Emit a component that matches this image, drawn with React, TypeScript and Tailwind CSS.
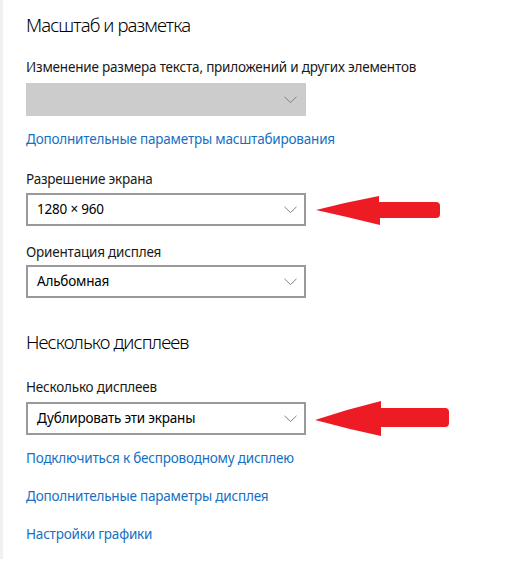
import React from "react";

const Chevron: React.FC = () => (
  <svg width="13" height="8" viewBox="0 0 13 8" className="shrink-0">
    <path d="M0.5 0.8 L6.5 6.6 L12.5 0.8" fill="none" stroke="#808080" strokeWidth="1" />
  </svg>
);

const Dropdown: React.FC<{ value?: string; disabled?: boolean }> = ({ value, disabled }) => (
  <div
    className={
      disabled
        ? "w-[280px] h-[33px] bg-[#cccccc] flex items-center justify-end pr-[9px]"
        : "w-[280px] h-[33px] border-2 border-[#999999] bg-white flex items-center justify-between pl-[9px] pr-[7px]"
    }
  >
    {value && <span className="text-[13.5px] tracking-[-0.2px] text-black">{value}</span>}
    <Chevron />
  </div>
);

const RedArrow: React.FC<{ big?: boolean }> = ({ big }) =>
  big ? (
    <svg width="136" height="37" viewBox="0 0 136 37" className="ml-[8px] shrink-0">
      <path
        d="M1 20 Q34 9 67 1 L67 8 L131 8 Q135 8 135 12 L135 23 Q135 27 131 27 L67 27 L67 36 Q34 29 1 20 Z"
        fill="#ed1c24"
      />
    </svg>
  ) : (
    <svg width="126" height="32" viewBox="0 0 126 32" className="ml-[9px] shrink-0">
      <path
        d="M1 16 Q32 8 64 2 L64 8 L121 8 Q125 8 125 12 L125 20 Q125 24 121 24 L65 24 L65 31 Q33 23 1 16 Z"
        fill="#ed1c24"
      />
    </svg>
  );

const Label: React.FC<{ children: React.ReactNode; className?: string }> = ({ children, className }) => (
  <div className={"text-[13.5px] tracking-[-0.2px] leading-[20px] text-[#1a1a1a] " + (className ?? "")}>
    {children}
  </div>
);

const Link: React.FC<{ children: React.ReactNode; className?: string }> = ({ children, className }) => (
  <div className={"text-[13.5px] tracking-[-0.2px] leading-[20px] text-[#1570c4] " + (className ?? "")}>
    {children}
  </div>
);

const App: React.FC = () => {
  return (
    <div className="w-[511px] h-[576px] bg-white font-['Noto_Sans',sans-serif]">
      <div className="h-[559px] border-l-[3px] border-[#f0f0f0] pl-[23px] pt-[10px]">
        <h1 className="text-[18.5px] tracking-[-0.9px] leading-[30px] font-light text-black">Масштаб и разметка</h1>

        <Label className="mt-[17px]">Изменение размера текста, приложений и других элементов</Label>
        <div className="mt-[6px]">
          <Dropdown disabled />
        </div>
        <Link className="mt-[13px]">Дополнительные параметры масштабирования</Link>

        <Label className="mt-[20px]">Разрешение экрана</Label>
        <div className="mt-[4px] flex items-center">
          <Dropdown value="1280 × 960" />
          <RedArrow />
        </div>

        <Label className="mt-[16px]">Ориентация дисплея</Label>
        <div className="mt-[3px]">
          <Dropdown value="Альбомная" />
        </div>

        <h1 className="mt-[29px] text-[18.5px] tracking-[-0.9px] leading-[30px] font-light text-black">
          Несколько дисплеев
        </h1>

        <Label className="mt-[20px]">Несколько дисплеев</Label>
        <div className="mt-[3px] flex items-center">
          <Dropdown value="Дублировать эти экраны" />
          <RedArrow big />
        </div>
        <Link className="mt-[11px]">Подключиться к беспроводному дисплею</Link>
        <Link className="mt-[18px]">Дополнительные параметры дисплея</Link>
        <Link className="mt-[18px]">Настройки графики</Link>
      </div>
    </div>
  );
};

export default App;
